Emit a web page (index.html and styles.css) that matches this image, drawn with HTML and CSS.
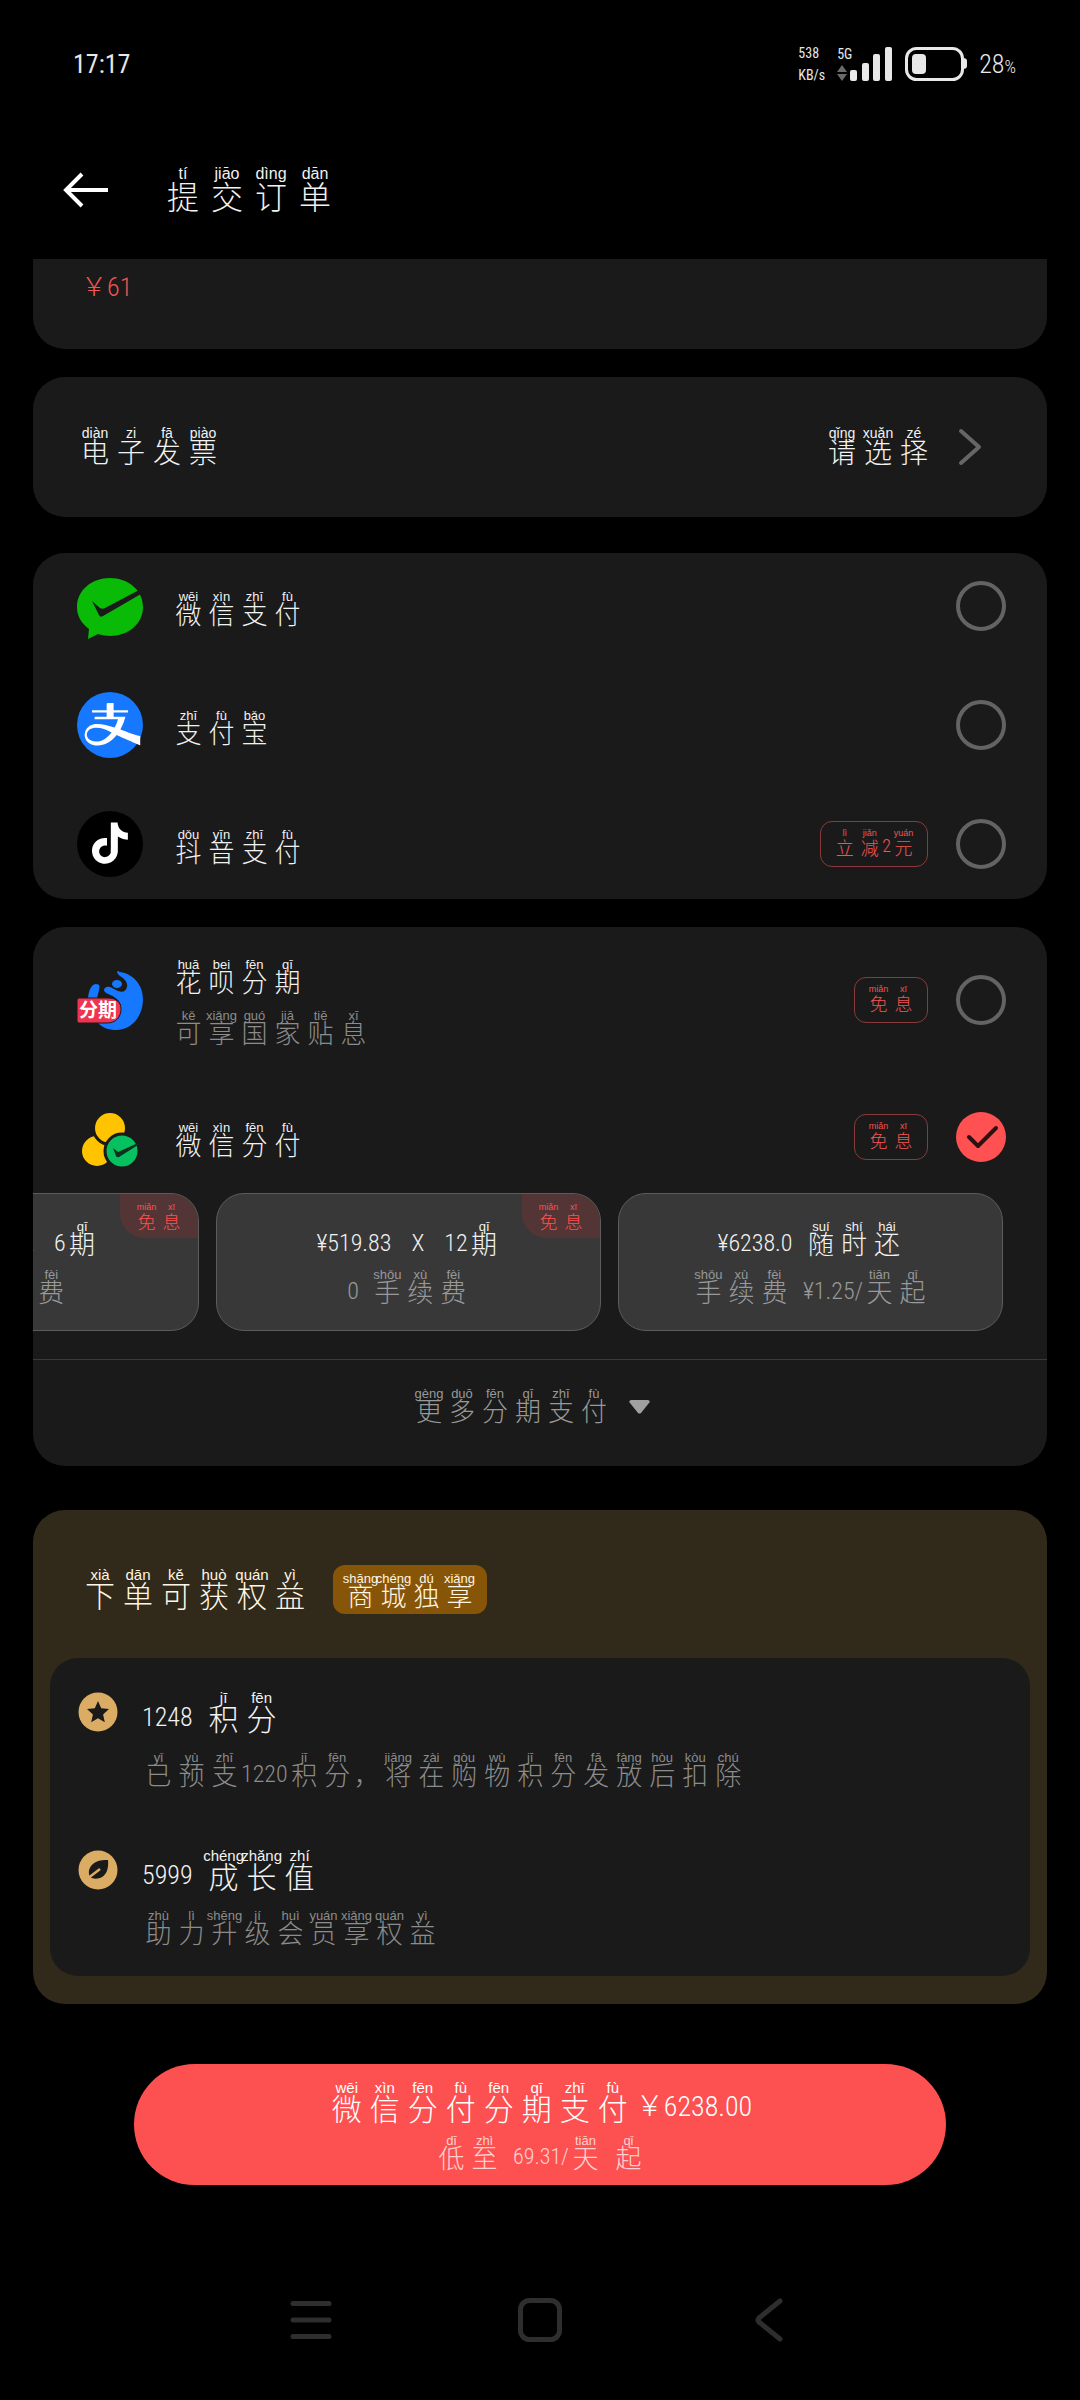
FILE: index.html
```html
<!DOCTYPE html>
<html lang="zh-CN">
<head>
<meta charset="utf-8">
<meta name="viewport" content="width=device-width, initial-scale=1">
<title>提交订单</title>
<link rel="stylesheet" href="styles.css">
</head>
<body>
<div class="screen">
  <header class="status">
    <span class="clock">17:17</span>
    <div class="status-right">
      <div class="speed"><span>538</span><span>KB/s</span></div>
      <div class="signal">
        <div class="net"><span>5G</span>
          <svg width="10" height="16" viewBox="0 0 10 16"><path d="M5 0l5 7H0zM5 16l5-7H0z" fill="#6a6a6a"/></svg>
        </div>
        <svg width="43" height="34" viewBox="0 0 43 34" fill="#e8e8e8"><rect x="0" y="23" width="7" height="11" rx="2"/><rect x="12" y="16" width="7" height="18" rx="2"/><rect x="23" y="7" width="7" height="27" rx="2"/><rect x="35" y="0" width="7" height="34" rx="2"/></svg>
      </div>
      <svg width="62" height="34" viewBox="0 0 62 34"><rect x="1.5" y="1.5" width="56" height="31" rx="10" fill="none" stroke="#e8e8e8" stroke-width="3"/><rect x="7" y="7" width="14" height="20" rx="4" fill="#e8e8e8"/><path d="M58 11q4 0 4 3v5q0 3-4 3z" fill="#e8e8e8"/></svg>
      <span class="battery">28<small>%</small></span>
    </div>
  </header>

  <div class="titlebar">
    <button class="back" aria-label="返回">
      <svg width="46" height="36" viewBox="0 0 46 36" fill="none" stroke="#fff" stroke-width="4"><path d="M45 18H3M19 2L3 18l16 16"/></svg>
    </button>
    <h1 class="py xl"><ruby>提<rt>tí</rt></ruby><ruby>交<rt>jiāo</rt></ruby><ruby>订<rt>dìng</rt></ruby><ruby>单<rt>dān</rt></ruby></h1>
  </div>

  <main>
    <section class="card price-card"><span class="price">￥61</span></section>

    <section class="card invoice">
      <span class="py lg"><ruby>电<rt>diàn</rt></ruby><ruby>子<rt>zi</rt></ruby><ruby>发<rt>fā</rt></ruby><ruby>票<rt>piào</rt></ruby></span>
      <button class="choose">
        <span class="py lg"><ruby>请<rt>qǐng</rt></ruby><ruby>选<rt>xuǎn</rt></ruby><ruby>择<rt>zé</rt></ruby></span>
        <svg width="24" height="38" viewBox="0 0 24 38" fill="none" stroke="#666" stroke-width="4" stroke-linecap="round" stroke-linejoin="round"><path d="M3 3l18 16L3 35"/></svg>
      </button>
    </section>

    <section class="card methods">
      <label class="method">
        <svg class="logo" viewBox="0 0 66 66"><path d="M33 5C15 5 0 17 0 34c0 9 4 16 12 22l-1 10 10-5c4 1 8 2 12 2 18 0 33-12 33-29S51 5 33 5z" fill="#09bb07"/><path d="M15 28l8 7c2 1 3 1 5 0l34-18 2 4-38 22c-2 1-3 1-4-1z" fill="#1a1a1a"/></svg>
        <span class="text"><span class="py"><ruby>微<rt>wēi</rt></ruby><ruby>信<rt>xìn</rt></ruby><ruby>支<rt>zhī</rt></ruby><ruby>付<rt>fù</rt></ruby></span></span>
        <input type="radio" name="pay">
      </label>
      <label class="method">
        <svg class="logo" viewBox="0 0 66 66"><circle cx="33" cy="33" r="33" fill="#1677ff"/><path transform="translate(3 3) scale(2.52)" fill="#fff" fill-rule="evenodd" d="M19.695 15.07c3.426 1.158 4.203 1.22 4.203 1.22V20s-6.19-2.602-9.315-4.119c-2.096 2.602-4.8 4.181-7.607 4.181-4.75 0-6.361-4.19-4.112-6.949.49-.602 1.324-1.175 2.617-1.497 2.025-.502 5.247.313 8.266 1.317a16.796 16.796 0 0 0 1.341-3.302H5.781v-.952h4.799V6.975H4.77v-.953h5.81V3.591s0-.409.411-.409h2.347v2.84h5.744v.951h-5.744v1.704h4.69a19.453 19.453 0 0 1-1.986 5.06c1.424.52 2.702 1.011 3.654 1.333zm-13.81-2.032c-.596.06-1.71.325-2.321.869-1.83 1.608-.735 4.55 2.968 4.55 2.151 0 4.301-1.388 5.99-3.61-2.403-1.182-4.438-2.028-6.637-1.809z"/></svg>
        <span class="text"><span class="py"><ruby>支<rt>zhī</rt></ruby><ruby>付<rt>fù</rt></ruby><ruby>宝<rt>bǎo</rt></ruby></span></span>
        <input type="radio" name="pay">
      </label>
      <label class="method">
        <svg class="logo" viewBox="0 0 66 66"><circle cx="33" cy="33" r="33" fill="#000"/><path transform="translate(12.3 11.5) scale(1.72)" fill="#fff" d="M12.525.02c1.31-.02 2.61-.01 3.91-.02.08 1.53.63 3.09 1.75 4.17 1.12 1.11 2.7 1.62 4.24 1.79v4.03c-1.44-.05-2.89-.35-4.2-.97-.57-.26-1.1-.59-1.62-.93-.01 2.92.01 5.84-.02 8.75-.08 1.4-.54 2.79-1.35 3.94-1.31 1.92-3.58 3.17-5.91 3.21-1.43.08-2.86-.31-4.08-1.03-2.02-1.19-3.44-3.37-3.65-5.71-.02-.5-.03-1-.01-1.49.18-1.9 1.12-3.72 2.58-4.96 1.66-1.44 3.98-2.13 6.15-1.72.02 1.48-.04 2.96-.04 4.44-.99-.32-2.15-.23-3.02.37-.63.41-1.11 1.04-1.36 1.75-.21.51-.15 1.07-.14 1.61.24 1.64 1.82 3.02 3.5 2.87 1.12-.01 2.19-.66 2.77-1.61.19-.33.4-.67.41-1.06.1-1.79.06-3.57.07-5.36.01-4.03-.01-8.05.02-12.07z"/></svg>
        <span class="text"><span class="py"><ruby>抖<rt>dǒu</rt></ruby><ruby>音<rt>yīn</rt></ruby><ruby>支<rt>zhī</rt></ruby><ruby>付<rt>fù</rt></ruby></span></span>
        <span class="tag py sm"><ruby>立<rt>lì</rt></ruby><ruby>减<rt>jiǎn</rt></ruby><b>2</b><ruby>元<rt>yuán</rt></ruby></span>
        <input type="radio" name="pay">
      </label>
    </section>

    <section class="card instalments">
      <label class="method">
        <svg class="logo" viewBox="0 0 66 66"><path d="M42 5c13 1 24 12 24 27 0 17-11 31-27 31-7 0-13-2-18-7l15-9 8-9c-3-7-8-9-13-11-4-2-5-4-3-6 3-3 7 0 11 2 5 3 10 2 11-3 1-4-2-8-7-11-3-2-4-5-1-5z" fill="#1677ff"/><ellipse cx="40" cy="17" rx="5" ry="4" fill="#1677ff"/><path d="M11 31c1-9 4-14 8-14s4 3 3 6l-2 8z" fill="#1677ff"/><path d="M2 31h29c8 0 13 4 13 11 0 8-5 14-14 14H2q-2 0-2-2V33q0-2 2-2z" fill="#f23251" stroke="#1a1a1a" stroke-width="1"/><text x="2" y="50" class="logo-text">分期</text></svg>
        <span class="text">
          <span class="py"><ruby>花<rt>huā</rt></ruby><ruby>呗<rt>bei</rt></ruby><ruby>分<rt>fēn</rt></ruby><ruby>期<rt>qī</rt></ruby></span>
          <span class="py muted"><ruby>可<rt>kě</rt></ruby><ruby>享<rt>xiǎng</rt></ruby><ruby>国<rt>guó</rt></ruby><ruby>家<rt>jiā</rt></ruby><ruby>贴<rt>tiē</rt></ruby><ruby>息<rt>xī</rt></ruby></span>
        </span>
        <span class="tag py sm"><ruby>免<rt>miǎn</rt></ruby><ruby>息<rt>xī</rt></ruby></span>
        <input type="radio" name="pay">
      </label>
      <label class="method">
        <svg class="logo" viewBox="0 0 66 66"><circle cx="20" cy="47" r="15" fill="#ffc300"/><circle cx="33" cy="24" r="16.5" fill="#ffc300" stroke="#1a1a1a" stroke-width="3"/><circle cx="45" cy="47" r="17" fill="#07c160" stroke="#1a1a1a" stroke-width="3"/><path d="M36 44l5 4 20-9v2L42 53q-2 1-3-1z" fill="#10301e"/></svg>
        <span class="text"><span class="py"><ruby>微<rt>wēi</rt></ruby><ruby>信<rt>xìn</rt></ruby><ruby>分<rt>fēn</rt></ruby><ruby>付<rt>fù</rt></ruby></span></span>
        <span class="tag py sm"><ruby>免<rt>miǎn</rt></ruby><ruby>息<rt>xī</rt></ruby></span>
        <input type="radio" name="pay" checked>
      </label>
      <div class="plans">
        <button class="plan">
          <span class="py"><b>¥1039.66</b><b class="gap">X</b><b>6</b><ruby>期<rt>qī</rt></ruby></span>
          <span class="py muted"><b class="before">0</b><ruby>手<rt>shǒu</rt></ruby><ruby>续<rt>xù</rt></ruby><ruby>费<rt>fèi</rt></ruby></span>
          <span class="corner py sm"><ruby>免<rt>miǎn</rt></ruby><ruby>息<rt>xī</rt></ruby></span>
        </button>
        <button class="plan">
          <span class="py"><b>¥519.83</b><b class="gap">X</b><b>12</b><ruby>期<rt>qī</rt></ruby></span>
          <span class="py muted"><b class="before">0</b><ruby>手<rt>shǒu</rt></ruby><ruby>续<rt>xù</rt></ruby><ruby>费<rt>fèi</rt></ruby></span>
          <span class="corner py sm"><ruby>免<rt>miǎn</rt></ruby><ruby>息<rt>xī</rt></ruby></span>
        </button>
        <button class="plan">
          <span class="py"><b class="before">¥6238.0</b><ruby>随<rt>suí</rt></ruby><ruby>时<rt>shí</rt></ruby><ruby>还<rt>hái</rt></ruby></span>
          <span class="py muted"><ruby>手<rt>shǒu</rt></ruby><ruby>续<rt>xù</rt></ruby><ruby>费<rt>fèi</rt></ruby><b class="after">¥1.25/</b><ruby>天<rt>tiān</rt></ruby><ruby>起<rt>qǐ</rt></ruby></span>
        </button>
      </div>
      <button class="more">
        <span class="py"><ruby>更<rt>gèng</rt></ruby><ruby>多<rt>duō</rt></ruby><ruby>分<rt>fēn</rt></ruby><ruby>期<rt>qī</rt></ruby><ruby>支<rt>zhī</rt></ruby><ruby>付<rt>fù</rt></ruby></span>
        <svg width="21" height="14" viewBox="0 0 21 14"><path d="M2 0h17q3 1 1 3l-8 10q-1.500 1-3 0L1 3q-2-2 1-3z" fill="#a0a0a0"/></svg>
      </button>
    </section>

    <section class="card benefits">
      <div class="benefits-head">
        <h2 class="py h"><ruby>下<rt>xià</rt></ruby><ruby>单<rt>dān</rt></ruby><ruby>可<rt>kě</rt></ruby><ruby>获<rt>huò</rt></ruby><ruby>权<rt>quán</rt></ruby><ruby>益<rt>yì</rt></ruby></h2>
        <span class="badge py"><ruby>商<rt>shāng</rt></ruby><ruby>城<rt>chéng</rt></ruby><ruby>独<rt>dú</rt></ruby><ruby>享<rt>xiǎng</rt></ruby></span>
      </div>
      <ul class="benefit-list">
        <li>
          <svg width="40" height="40" viewBox="0 0 40 40"><circle cx="20" cy="20" r="19.500" fill="#dbac63"/><path d="M20 9l3.200 7.300 7.800.8-5.900 5.300 1.700 7.800L20 26.200l-6.800 4 1.700-7.800L9 17.100l7.800-.8z" fill="#1a1a1a"/></svg>
          <div>
            <h3 class="py h"><b class="before">1248</b><ruby>积<rt>jī</rt></ruby><ruby>分<rt>fēn</rt></ruby></h3>
            <p class="py muted"><ruby>已<rt>yǐ</rt></ruby><ruby>预<rt>yù</rt></ruby><ruby>支<rt>zhī</rt></ruby><b>1220</b><ruby>积<rt>jī</rt></ruby><ruby>分<rt>fēn</rt></ruby><span class="comma">，</span><ruby>将<rt>jiāng</rt></ruby><ruby>在<rt>zài</rt></ruby><ruby>购<rt>gòu</rt></ruby><ruby>物<rt>wù</rt></ruby><ruby>积<rt>jī</rt></ruby><ruby>分<rt>fēn</rt></ruby><ruby>发<rt>fā</rt></ruby><ruby>放<rt>fàng</rt></ruby><ruby>后<rt>hòu</rt></ruby><ruby>扣<rt>kòu</rt></ruby><ruby>除<rt>chú</rt></ruby></p>
          </div>
        </li>
        <li>
          <svg width="40" height="40" viewBox="0 0 40 40"><circle cx="20" cy="20" r="19.500" fill="#dbac63"/><path d="M30 10c1 9-2 16-8 18-4 1-7 1-10-1-3-6 0-12 6-15 4-2 8-2 12-2z" fill="#1a1a1a"/><path d="M9 29l13-10" stroke="#dbac63" stroke-width="2.500"/></svg>
          <div>
            <h3 class="py h"><b class="before">5999</b><ruby>成<rt>chéng</rt></ruby><ruby>长<rt>zhǎng</rt></ruby><ruby>值<rt>zhí</rt></ruby></h3>
            <p class="py muted"><ruby>助<rt>zhù</rt></ruby><ruby>力<rt>lì</rt></ruby><ruby>升<rt>shēng</rt></ruby><ruby>级<rt>jí</rt></ruby><ruby>会<rt>huì</rt></ruby><ruby>员<rt>yuán</rt></ruby><ruby>享<rt>xiǎng</rt></ruby><ruby>权<rt>quán</rt></ruby><ruby>益<rt>yì</rt></ruby></p>
          </div>
        </li>
      </ul>
    </section>
  </main>

  <button class="pay">
    <span class="py h"><ruby>微<rt>wēi</rt></ruby><ruby>信<rt>xìn</rt></ruby><ruby>分<rt>fēn</rt></ruby><ruby>付<rt>fù</rt></ruby><ruby>分<rt>fēn</rt></ruby><ruby>期<rt>qī</rt></ruby><ruby>支<rt>zhī</rt></ruby><ruby>付<rt>fù</rt></ruby><b class="amount">￥6238.00</b></span>
    <span class="py soft"><ruby>低<rt>dī</rt></ruby><ruby>至<rt>zhì</rt></ruby><b class="after">69.31/</b><ruby>天<rt>tiān</rt></ruby><ruby class="spaced">起<rt>qǐ</rt></ruby></span>
  </button>

  <nav class="sysnav">
    <button aria-label="最近任务"><svg width="42" height="44" viewBox="0 0 42 44" stroke="#2e2e2e" stroke-width="5" stroke-linecap="round"><path d="M3 5.500h36M3 22h36M3 38.500h36"/></svg></button>
    <button aria-label="主屏幕"><svg width="44" height="44" viewBox="0 0 44 44" fill="none" stroke="#2e2e2e" stroke-width="5"><rect x="2.500" y="2.500" width="39" height="39" rx="9"/></svg></button>
    <button aria-label="返回"><svg width="28" height="44" viewBox="0 0 28 44" fill="none" stroke="#2e2e2e" stroke-width="5" stroke-linecap="round" stroke-linejoin="round"><path d="M25 3L4 20q-2 2 0 4l21 17"/></svg></button>
  </nav>
</div>
</body>
</html>
```
FILE: styles.css
```css
* { box-sizing: border-box; margin: 0; padding: 0; }

body {
  background: #000;
  color: #f2f2f2;
  font-family: "Roboto Condensed", "Liberation Sans Narrow", "Liberation Sans", "Noto Sans CJK SC", sans-serif;
  font-weight: 300;
}

button {
  font: inherit;
  color: inherit;
  background: none;
  border: 0;
  cursor: pointer;
}

svg { display: block; flex: none; }

.screen {
  display: flex;
  flex-direction: column;
  min-height: 100vh;
}

/* Text with pinyin: every character sits in a cell of equal width */
.py {
  --size: 26px;
  --pinyin: 13px;
  --cell: 33px;
  --digit: 24px;
  display: flex;
  align-items: flex-end;
  padding-bottom: 6px;
  font-size: var(--size);
  line-height: calc(var(--size) - 6px);
  font-weight: 300;
  white-space: nowrap;
}
.py.xl { --size: 32px; --pinyin: 16px; --cell: 44px; }
.py.lg { --size: 28px; --pinyin: 14px; --cell: 36px; }
.py.h { --size: 30px; --pinyin: 15px; --cell: 38px; --digit: 26px; }
.py.sm { --size: 18px; --pinyin: 9px; --cell: 25px; --digit: 18px; padding-bottom: 0; line-height: 18px; }

ruby {
  display: inline-flex;
  flex-direction: column-reverse;
  align-items: center;
  width: var(--cell);
  font-family: "Noto Sans CJK SC", sans-serif;
}
rt {
  display: block;
  font-family: "Liberation Sans", sans-serif;
  font-size: var(--pinyin);
  line-height: var(--pinyin);
}
.py b { font-size: var(--digit); font-weight: 300; }
.py .before { margin-right: 12px; }
.py .after { margin-left: 12px; }
.py .gap { margin: 0 20px; }
.muted { color: #8c8c8c; }

/* Status bar */
.status {
  display: flex;
  align-items: center;
  justify-content: space-between;
  height: 128px;
  padding: 0 64px 0 73px;
  color: #e8e8e8;
}
.clock { font-size: 26px; font-weight: 400; }
.status-right { display: flex; align-items: center; gap: 12px; }
.speed { display: flex; flex-direction: column; gap: 6px; font-size: 14px; line-height: 16px; font-weight: 400; }
.signal { display: flex; align-items: flex-end; gap: 3px; }
.net { display: flex; flex-direction: column; height: 34px; width: 10px; justify-content: space-between; font-size: 14px; line-height: 14px; font-weight: 400; }
.battery { font-size: 26px; }
.battery small { font-size: 18px; }

/* Title bar */
.titlebar {
  display: flex;
  align-items: center;
  gap: 52px;
  height: 124px;
  margin-bottom: 7px;
  padding: 0 63px;
}

/* Cards */
main { display: flex; flex-direction: column; padding: 0 33px; }
.card { background: #1a1a1a; border-radius: 32px; overflow: hidden; }

.price-card { border-radius: 0 0 32px 32px; padding: 12px 48px 46px; }
.price { display: block; color: #f05553; font-size: 26px; line-height: 32px; }

.invoice {
  display: flex;
  align-items: center;
  justify-content: space-between;
  height: 140px;
  margin-top: 28px;
  padding: 0 65px 0 44px;
}
.choose { display: flex; align-items: center; gap: 26px; }

.methods {
  display: flex;
  flex-direction: column;
  gap: 53px;
  margin-top: 36px;
  padding: 20px 0 22px;
}
.method { display: flex; align-items: center; padding: 0 41px 0 44px; cursor: pointer; }
.logo { width: 66px; height: 66px; }
.logo-text { font: 700 19px "Noto Sans CJK SC", sans-serif; fill: #fff; }
.text { display: flex; flex-direction: column; gap: 12px; flex: 1; padding: 6px 0 0 29px; }

input[type="radio"] {
  appearance: none;
  flex: none;
  width: 50px;
  height: 50px;
  border: 4px solid #636363;
  border-radius: 50%;
}
input[type="radio"]:checked {
  border: 0;
  background: #ff5151 url("data:image/svg+xml,%3Csvg xmlns='http://www.w3.org/2000/svg' viewBox='0 0 50 50'%3E%3Cpath d='M13 25l9 9 18-18' fill='none' stroke='%232a1212' stroke-width='4' stroke-linecap='round' stroke-linejoin='round'/%3E%3C/svg%3E");
}

.tag {
  align-items: center;
  height: 46px;
  margin-right: 28px;
  padding: 0 11px;
  border: 1px solid #8a3a3a;
  border-radius: 12px;
  color: #f55353;
}
.py.tag { padding-bottom: 4px; }
.tag b { align-self: flex-end; margin-bottom: 7px; }

.instalments { margin-top: 28px; padding-top: 25px; }
.instalments .method + .method { margin-top: 56px; }

/* Instalment plans, scrolled to the last one */
.plans {
  display: flex;
  justify-content: flex-end;
  gap: 17px;
  margin: 23px 0 28px;
  padding-right: 44px;
}
.plan {
  position: relative;
  display: flex;
  flex: none;
  flex-direction: column;
  align-items: center;
  justify-content: center;
  gap: 9px;
  width: 385px;
  height: 138px;
  padding-top: 3px;
  background: #383838;
  border: 1px solid #5c5c5c;
  border-radius: 28px;
  overflow: hidden;
}
.plan .muted { color: #999; }
.corner {
  position: absolute;
  top: 0;
  right: 0;
  align-items: center;
  height: 44px;
  padding: 0 14px;
  background: #533535;
  border-bottom-left-radius: 24px;
  color: #ff5050;
}
.more {
  display: flex;
  align-items: center;
  justify-content: center;
  gap: 18px;
  width: 100%;
  padding: 27px 18px 40px 0;
  border-top: 1px solid #3a3a3a;
  color: #999;
}

/* Benefits */
.benefits { margin-top: 44px; padding: 0 17px 28px; background: #31291a; }
.benefits-head { display: flex; align-items: center; gap: 24px; padding: 55px 31px 44px; color: #fff6e4; }
.badge {
  align-items: center;
  height: 49px;
  padding: 4px 11px 6px;
  background: #875508;
  border-radius: 12px;
}
.benefit-list {
  display: flex;
  flex-direction: column;
  gap: 58px;
  padding: 32px 28px 28px;
  background: #1a1a1a;
  border-radius: 28px;
  list-style: none;
}
.benefit-list li { display: flex; gap: 24px; }
.benefit-list li > div { display: flex; flex-direction: column; gap: 16px; }
.benefit-list svg { margin-top: 2px; }
.comma { width: 28px; font-family: "Noto Sans CJK SC", sans-serif; }

/* Pay button */
.pay {
  display: flex;
  flex-direction: column;
  align-items: center;
  gap: 9px;
  margin: 60px 134px 0;
  padding: 16px 0 12px;
  background: #fd5151;
  border-radius: 61px;
  color: #fff;
}
.pay .soft { --digit: 22px; color: #ffd0d0; }
.pay .amount { font-size: 28px; margin-left: 4px; }
.spaced { margin-left: 10px; }

/* System navigation */
.sysnav {
  display: grid;
  grid-template-columns: repeat(3, 229px);
  align-items: center;
  justify-content: center;
  justify-items: center;
  height: 160px;
  margin-top: auto;
}
```
